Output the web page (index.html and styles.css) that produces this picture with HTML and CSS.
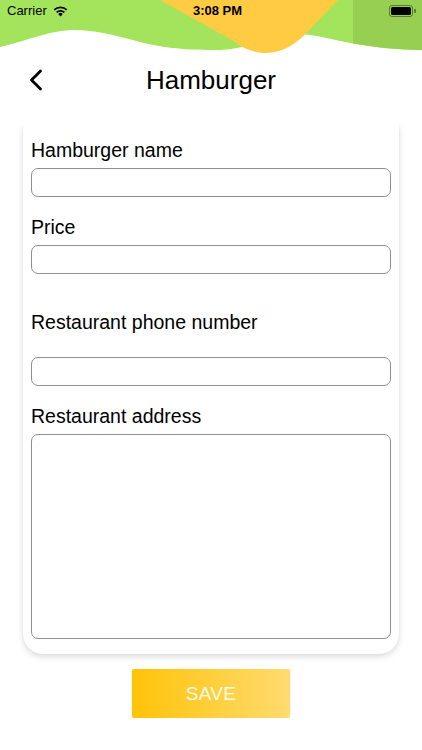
FILE: index.html
```html
<!DOCTYPE html>
<html lang="en">

<head>
    <meta charset="UTF-8">
    <meta name="viewport" content="width=device-width, initial-scale=1.0">
    <title>Hamburger</title>
    <link rel="stylesheet" href="styles.css">
</head>

<body>
    <header class="top">
        <svg class="waves" width="422" height="58" viewBox="0 0 422 58">
            <defs>
                <clipPath id="waveClip">
                    <path d="M0,0 H422 V50 C400,50 370,47 345,42 C325,38 312,34 298,34 C275,34 250,50 215,50 C180,50 160,47 140,42 C115,35 95,30 75,30 C50,30 30,40 0,47 Z" />
                </clipPath>
            </defs>
            <g clip-path="url(#waveClip)">
                <rect x="0" y="0" width="422" height="58" fill="#a4e35c" />
                <rect x="353" y="0" width="69" height="58" fill="#97cf52" />
            </g>
            <path d="M160,0 H338 L312,27 Q290,53 266,53 Q248,53 232,40 Z" fill="#fecb42" />
        </svg>

        <div class="status-bar">
            <div class="status-left">
                <span>Carrier</span>
                <svg class="wifi" width="15" height="11" viewBox="0 0 14 10">
                    <path d="M7,9.6 L4.9,7.3 A3,3 0 0 1 9.1,7.3 Z" fill="#000" />
                    <path d="M3.4,5.8 A5.2,5.2 0 0 1 10.6,5.8" fill="none" stroke="#000" stroke-width="1.7" />
                    <path d="M1.2,3.5 A8.3,8.3 0 0 1 12.8,3.5" fill="none" stroke="#000" stroke-width="1.7" />
                </svg>
            </div>
            <span class="status-time">3:08 PM</span>
            <div class="status-right">
                <span class="battery"><span class="battery-level"></span></span>
                <span class="battery-nub"></span>
            </div>
        </div>
    </header>

    <nav class="nav-bar">
        <button class="back-button" aria-label="Back">
            <svg width="14" height="22" viewBox="0 0 14 22">
                <path d="M11.5,2 L2.5,11 L11.5,20" fill="none" stroke="#000" stroke-width="2.8" stroke-linecap="round" stroke-linejoin="round" />
            </svg>
        </button>
        <h1>Hamburger</h1>
    </nav>

    <main class="scroll">
        <form class="card">
            <div class="field">
                <label for="name">Hamburger name</label>
                <input type="text" id="name">
            </div>
            <div class="field">
                <label for="price">Price</label>
                <input type="text" id="price">
            </div>
            <div class="field field-spaced">
                <label for="phone">Restaurant phone number</label>
                <input type="text" id="phone">
            </div>
            <div class="field">
                <label for="address">Restaurant address</label>
                <textarea id="address"></textarea>
            </div>
        </form>
    </main>

    <div class="actions">
        <button class="save-button">SAVE</button>
    </div>
</body>

</html>
```

FILE: styles.css
```css
/* General */
body {
    margin: 0;
    font-family: "Liberation Sans", Arial, sans-serif;
    background-color: #fff;
    color: #000;
    width: 422px;
}

/* Header with waves */
.top {
    position: relative;
    height: 58px;
}

.waves {
    position: absolute;
    top: 0;
    left: 0;
    display: block;
}

.status-bar {
    position: relative;
    display: flex;
    align-items: center;
    justify-content: space-between;
    height: 20px;
    padding: 1px 6px 0 7px;
    font-size: 13px;
    line-height: 20px;
}

.status-left {
    display: flex;
    align-items: center;
    gap: 6px;
    width: 120px;
}

.wifi {
    display: block;
}

.status-time {
    font-weight: bold;
    margin-left: 12px;
}

.status-right {
    display: flex;
    align-items: center;
    justify-content: flex-end;
    width: 120px;
}

.battery {
    display: block;
    width: 20px;
    height: 8px;
    padding: 1px;
    border: 1px solid rgba(0, 0, 0, 0.4);
    border-radius: 3px;
}

.battery-level {
    display: block;
    height: 100%;
    background-color: #000;
    border-radius: 1.5px;
}

.battery-nub {
    display: block;
    width: 1.5px;
    height: 4px;
    margin-left: 1px;
    background-color: rgba(0, 0, 0, 0.4);
    border-radius: 0 1px 1px 0;
}

/* Navigation bar */
.nav-bar {
    position: relative;
    height: 44px;
    display: flex;
    align-items: center;
    justify-content: center;
}

.nav-bar h1 {
    margin: 0;
    font-size: 26px;
    font-weight: normal;
    line-height: 44px;
}

.back-button {
    position: absolute;
    left: 29px;
    top: 11px;
    padding: 0;
    border: none;
    background: none;
    display: block;
}

.back-button svg {
    display: block;
}

/* Form card */
.scroll {
    display: block;
    margin-top: 23px;
    padding-bottom: 12px;
    overflow: hidden;
}

.card {
    margin: 0 23px;
    padding: 13px 8px 15px;
    background-color: #fff;
    border-radius: 0 0 20px 20px;
    box-shadow: 0 3px 6px rgba(0, 0, 0, 0.13), 0 0 2px rgba(0, 0, 0, 0.08);
    display: flex;
    flex-direction: column;
    gap: 18px;
}

.field label {
    display: block;
    font-size: 19.5px;
    line-height: 24px;
    margin-bottom: 6px;
}

.field-spaced label {
    padding: 18px 0 17px;
}

.field input,
.field textarea {
    display: block;
    box-sizing: border-box;
    width: 100%;
    height: 29px;
    margin: 0;
    padding: 4px 8px;
    border: 1px solid #8e8e8e;
    border-radius: 7px;
    font-family: inherit;
    font-size: 16px;
    background-color: #fff;
    outline: none;
}

.field textarea {
    height: 205px;
    resize: none;
}

/* Save button */
.actions {
    display: flex;
    justify-content: center;
    margin-top: 3px;
}

.save-button {
    width: 158px;
    height: 49px;
    border: none;
    border-radius: 2px;
    background: linear-gradient(to right, #ffc307, #ffdb70);
    box-shadow: 0 1px 2px rgba(0, 0, 0, 0.12);
    color: #fffbe6;
    font-family: inherit;
    font-size: 19px;
    letter-spacing: 0.3px;
    cursor: pointer;
}
```
